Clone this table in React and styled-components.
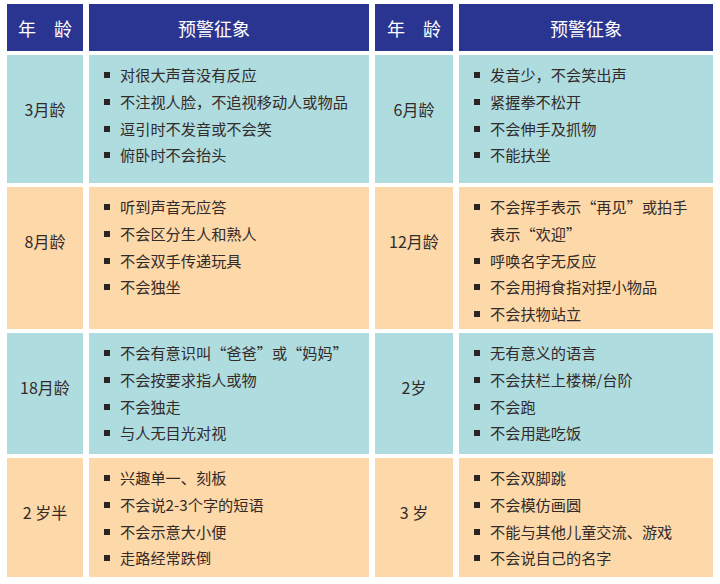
import React from 'react';
import styled, { createGlobalStyle } from 'styled-components';

const Global = createGlobalStyle`
  body {
    margin: 0;
    background: #ffffff;
    font-family: "Noto Sans CJK SC", "Noto Sans", sans-serif;
  }
`;

const Table = styled.div`
  display: grid;
  grid-template-columns: 76px 280px 78px 254px;
  grid-template-rows: 47px 128px 142px 121px 119px;
  column-gap: 6px;
  row-gap: 4px;
  padding: 4px 0 0 7px;
  width: 720px;
  height: 584px;
  box-sizing: border-box;
`;

const HeadCell = styled.div`
  background: #2a3591;
  color: #ffffff;
  font-size: 18px;
  display: flex;
  align-items: center;
  justify-content: center;
  gap: ${p => (p.spread ? '18px' : '0')};
  padding-right: ${p => p.shift || 0}px;
`;

const AgeCell = styled.div`
  background: ${p => (p.tone === 'peach' ? '#fdd8a8' : '#afdcdf')};
  color: #332a2a;
  font-size: 16px;
  line-height: 20px;
  text-align: center;
  padding-top: 44px;
  box-sizing: border-box;
`;

const DescCell = styled.ul`
  background: ${p => (p.tone === 'peach' ? '#fdd8a8' : '#afdcdf')};
  margin: 0;
  padding: 6px 8px 0 15px;
  list-style: none;
  color: #332a2a;
  font-size: 15.2px;
  line-height: 26.8px;
`;

const Item = styled.li`
  display: flex;
  align-items: flex-start;
`;

const Bullet = styled.span`
  flex: none;
  width: 6px;
  height: 6px;
  margin: 11px 10px 0 0;
  background: #2a2424;
`;

const rows = [
  {
    tone: 'blue',
    left: { age: '3月龄', items: ['对很大声音没有反应', '不注视人脸，不追视移动人或物品', '逗引时不发音或不会笑', '俯卧时不会抬头'] },
    right: { age: '6月龄', items: ['发音少，不会笑出声', '紧握拳不松开', '不会伸手及抓物', '不能扶坐'] },
  },
  {
    tone: 'peach',
    left: { age: '8月龄', items: ['听到声音无应答', '不会区分生人和熟人', '不会双手传递玩具', '不会独坐'] },
    right: {
      age: '12月龄',
      items: [
        <>不会挥手表示“再见”或拍手<br />表示“欢迎”</>,
        '呼唤名字无反应',
        '不会用拇食指对捏小物品',
        '不会扶物站立',
      ],
    },
  },
  {
    tone: 'blue',
    left: { age: '18月龄', items: ['不会有意识叫“爸爸”或“妈妈”', '不会按要求指人或物', '不会独走', '与人无目光对视'] },
    right: { age: '2岁', items: ['无有意义的语言', '不会扶栏上楼梯/台阶', '不会跑', '不会用匙吃饭'] },
  },
  {
    tone: 'peach',
    left: { age: '2 岁半', items: ['兴趣单一、刻板', '不会说2-3个字的短语', '不会示意大小便', '走路经常跌倒'] },
    right: { age: '3 岁', items: ['不会双脚跳', '不会模仿画圆', '不能与其他儿童交流、游戏', '不会说自己的名字'] },
  },
];

const Side = ({ tone, data }) => (
  <>
    <AgeCell tone={tone}>{data.age}</AgeCell>
    <DescCell tone={tone}>
      {data.items.map((it, i) => (
        <Item key={i}>
          <Bullet />
          <span>{it}</span>
        </Item>
      ))}
    </DescCell>
  </>
);

export default function App() {
  return (
    <>
      <Global />
      <Table>
        <HeadCell spread><span>年</span><span>龄</span></HeadCell>
        <HeadCell shift={30}>预警征象</HeadCell>
        <HeadCell spread><span>年</span><span>龄</span></HeadCell>
        <HeadCell>预警征象</HeadCell>
        {rows.map((r, i) => (
          <React.Fragment key={i}>
            <Side tone={r.tone} data={r.left} />
            <Side tone={r.tone} data={r.right} />
          </React.Fragment>
        ))}
      </Table>
    </>
  );
}
